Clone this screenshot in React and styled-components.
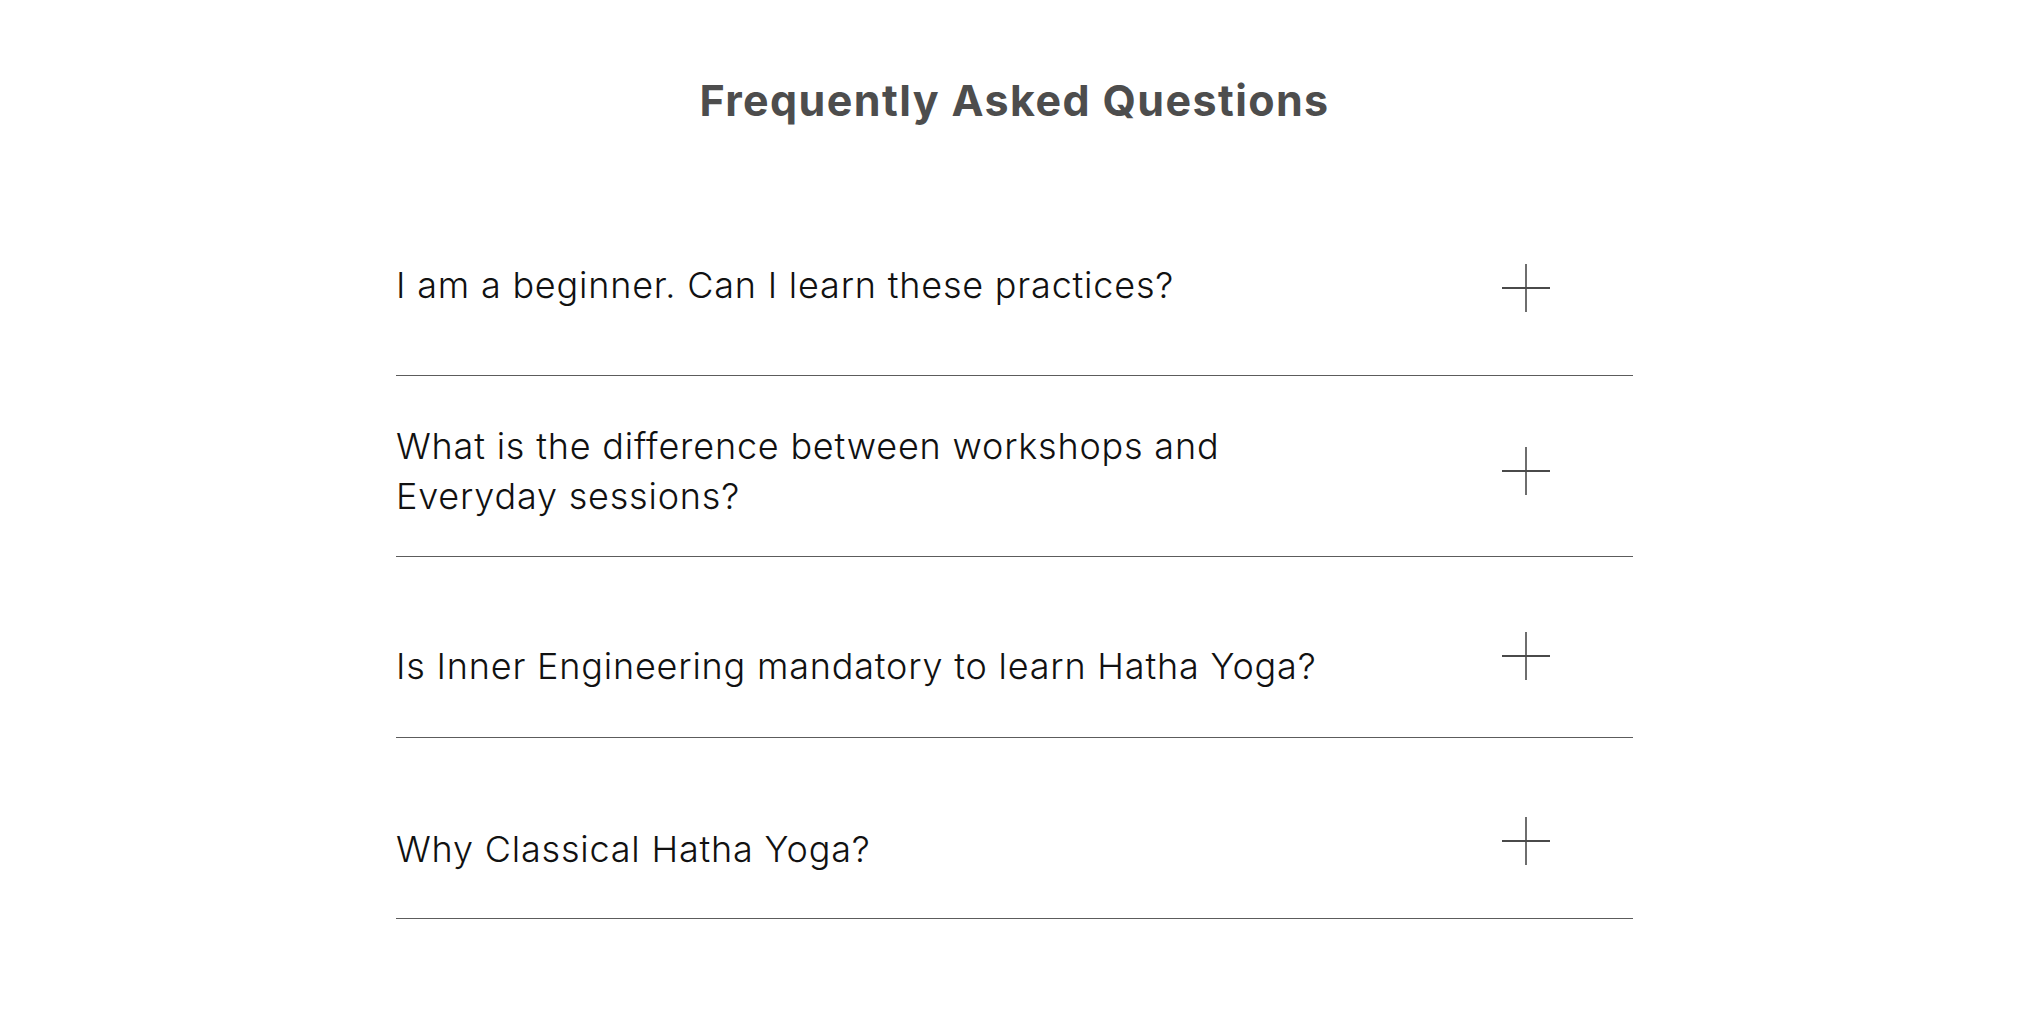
import React from 'react'
import styled, { createGlobalStyle } from 'styled-components'

/**
 * Data
 */
const faqs = [
  { q: 'I am a beginner. Can I learn these practices?', textTop: 65, iconTop: 69 },
  {
    q: 'What is the difference between workshops and Everyday sessions?',
    textTop: 45,
    iconTop: 71,
  },
  { q: 'Is Inner Engineering mandatory to learn Hatha Yoga?', textTop: 84, iconTop: 75 },
  { q: 'Why Classical Hatha Yoga?', textTop: 86, iconTop: 79 },
]

/**
 * Style
 */
const GlobalStyle = createGlobalStyle`
  html, body {
    margin: 0;
    padding: 0;
    background: #ffffff;
  }
  body {
    font-family: Inter, "Open Sans", "Liberation Sans", sans-serif;
  }
`

const Section = styled.section`
  display: flex;
  flex-direction: column;
  align-items: center;
  padding-top: 75px;
  padding-bottom: 110px;
`

const Title = styled.h2`
  margin: 0 0 70px;
  font-size: 43px;
  line-height: 50px;
  font-weight: 700;
  color: #4d4d4d;
  letter-spacing: 1.4px;
`

const List = styled.div`
  width: 1237px;
  display: flex;
  flex-direction: column;
`

const Row = styled.div`
  box-sizing: border-box;
  height: 181px;
  display: flex;
  justify-content: space-between;
  align-items: flex-start;
  border-bottom: 1px solid #5c5c5c;
  cursor: pointer;
`

const Question = styled.div`
  max-width: 950px;
  padding-top: ${(p) => p.$top}px;
  font-size: 36px;
  line-height: 50px;
  font-weight: 300;
  letter-spacing: 0.8px;
  color: #111111;
`

const Toggle = styled.span`
  display: block;
  width: 48px;
  height: 48px;
  margin-top: ${(p) => p.$top}px;
  margin-right: 83px;
  flex-shrink: 0;
`

const Plus = () => (
  <svg width="48" height="48" viewBox="0 0 48 48">
    <line x1="24" y1="0" x2="24" y2="48" stroke="#4a4a4a" strokeWidth="1.6" />
    <line x1="0" y1="24" x2="48" y2="24" stroke="#4a4a4a" strokeWidth="1.8" />
  </svg>
)

/**
 * Component
 */
const App = () => (
  <>
    <GlobalStyle />
    <Section>
      <Title>Frequently Asked Questions</Title>
      <List>
        {faqs.map((item) => (
          <Row key={item.q}>
            <Question $top={item.textTop}>{item.q}</Question>
            <Toggle $top={item.iconTop}>
              <Plus />
            </Toggle>
          </Row>
        ))}
      </List>
    </Section>
  </>
)

export default App
